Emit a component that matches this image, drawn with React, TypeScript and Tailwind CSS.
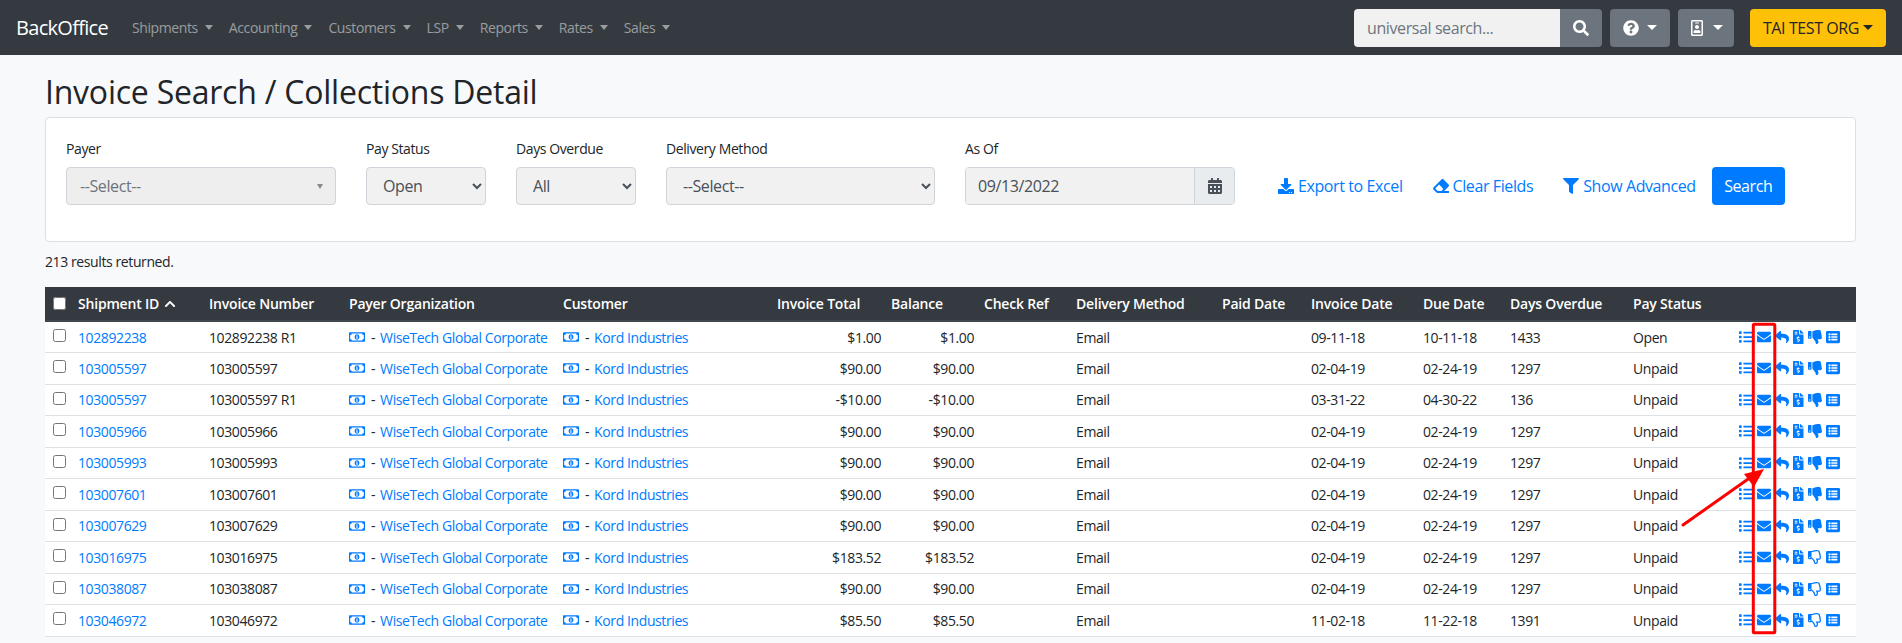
import React from 'react';
import {
  FaCalendarAlt,
  FaChevronUp,
  FaDownload,
  FaEnvelope,
  FaEraser,
  FaFileInvoiceDollar,
  FaFilter,
  FaList,
  FaListAlt,
  FaQuestionCircle,
  FaRegIdBadge,
  FaRegMoneyBillAlt,
  FaRegThumbsDown,
  FaReply,
  FaSearch,
  FaThumbsDown,
} from 'react-icons/fa';

const navItems = ['Shipments', 'Accounting', 'Customers', 'LSP', 'Reports', 'Rates', 'Sales'];

const rows = [
  { id: '102892238', inv: '102892238 R1', total: '$1.00', date: '09-11-18', due: '10-11-18', days: '1433', status: 'Open', down: true },
  { id: '103005597', inv: '103005597', total: '$90.00', date: '02-04-19', due: '02-24-19', days: '1297', status: 'Unpaid', down: true },
  { id: '103005597', inv: '103005597 R1', total: '-$10.00', date: '03-31-22', due: '04-30-22', days: '136', status: 'Unpaid', down: true },
  { id: '103005966', inv: '103005966', total: '$90.00', date: '02-04-19', due: '02-24-19', days: '1297', status: 'Unpaid', down: true },
  { id: '103005993', inv: '103005993', total: '$90.00', date: '02-04-19', due: '02-24-19', days: '1297', status: 'Unpaid', down: true },
  { id: '103007601', inv: '103007601', total: '$90.00', date: '02-04-19', due: '02-24-19', days: '1297', status: 'Unpaid', down: true },
  { id: '103007629', inv: '103007629', total: '$90.00', date: '02-04-19', due: '02-24-19', days: '1297', status: 'Unpaid', down: true },
  { id: '103016975', inv: '103016975', total: '$183.52', date: '02-04-19', due: '02-24-19', days: '1297', status: 'Unpaid', down: false },
  { id: '103038087', inv: '103038087', total: '$90.00', date: '02-04-19', due: '02-24-19', days: '1297', status: 'Unpaid', down: false },
  { id: '103046972', inv: '103046972', total: '$85.50', date: '11-02-18', due: '11-22-18', days: '1391', status: 'Unpaid', down: false },
];

const headers = [
  { label: 'Invoice Number', w: 'w-[140px]' },
  { label: 'Payer Organization', w: 'w-[214px]' },
  { label: 'Customer', w: 'w-[214px]' },
  { label: 'Invoice Total', w: 'w-[114px]' },
  { label: 'Balance', w: 'w-[93px]' },
  { label: 'Check Ref', w: 'w-[92px]' },
  { label: 'Delivery Method', w: 'w-[146px]' },
  { label: 'Paid Date', w: 'w-[89px]' },
  { label: 'Invoice Date', w: 'w-[112px]' },
  { label: 'Due Date', w: 'w-[87px]' },
  { label: 'Days Overdue', w: 'w-[123px]' },
  { label: 'Pay Status', w: 'w-[106px]' },
];

const MoneyLink = ({ name }: { name: string }) => (
  <span className="flex items-center whitespace-nowrap">
    <FaRegMoneyBillAlt className="text-[#007bff] text-[16px]" />
    <span className="ml-[6px] mr-[5px]">-</span>
    <a className="text-[#007bff]">{name}</a>
  </span>
);

const FilterLabel = ({ children }: { children: React.ReactNode }) => (
  <label className="block text-[14px] leading-[21px] mb-[8px]">{children}</label>
);

const TextLink = ({ icon, children }: { icon: React.ReactNode; children: React.ReactNode }) => (
  <a className="flex items-center gap-[4px] text-[#007bff] whitespace-nowrap">
    {icon}
    {children}
  </a>
);

export default function App() {
  return (
    <div className="relative min-h-[643px] bg-[#f8f9fa] text-[#212529] font-['Open_Sans',sans-serif] text-[14px] tracking-[-0.4px] overflow-hidden">
      <nav className="h-[55px] bg-[#343a40] flex items-center pl-[16px] pr-[16px]">
        <a className="text-white text-[20px] tracking-[-0.7px] mr-[24px]">BackOffice</a>
        <ul className="flex items-center gap-[16px] text-[14px] text-white/50">
          {navItems.map((item) => (
            <li key={item} className="flex items-center gap-[7px]">
              {item}
              <span className="border-t-[5px] border-x-[4.5px] border-x-transparent border-t-white/50" />
            </li>
          ))}
        </ul>
        <div className="ml-auto flex items-center">
          <div className="flex w-[248px] h-[38px]">
            <input
              readOnly
              placeholder="universal search..."
              className="w-[206px] bg-[#f1f1f1] rounded-l-[4px] px-[13px] text-[16px] placeholder:text-[#6c757d] outline-none"
            />
            <button className="w-[42px] bg-[#6c757d] rounded-r-[4px] text-white flex items-center justify-center">
              <FaSearch className="text-[16px]" />
            </button>
          </div>
          <button className="ml-[8px] w-[60px] h-[38px] bg-[#6c757d] rounded-[4px] text-white flex items-center justify-center gap-[8px]">
            <FaQuestionCircle className="text-[16px]" />
            <span className="border-t-[5px] border-x-[5px] border-x-transparent border-t-white" />
          </button>
          <button className="ml-[8px] w-[56px] h-[38px] bg-[#6c757d] rounded-[4px] text-white flex items-center justify-center gap-[8px]">
            <FaRegIdBadge className="text-[16px]" />
            <span className="border-t-[5px] border-x-[5px] border-x-transparent border-t-white" />
          </button>
          <button className="ml-[16px] w-[136px] h-[38px] bg-[#ffc107] rounded-[4px] text-[#212529] text-[16px] flex items-center justify-center gap-[4px]">
            TAI TEST ORG
            <span className="border-t-[5px] border-x-[5px] border-x-transparent border-t-[#212529]" />
          </button>
        </div>
      </nav>

      <main className="pl-[45px] pr-[46px]">
        <h1 className="text-[32px] leading-[38px] font-medium tracking-[-0.23px] mt-[18px] mb-[6px]">Invoice Search / Collections Detail</h1>

        <section className="h-[125px] bg-white border border-[#dfdfdf] rounded-[4px] pl-[20px] pt-[20px] flex items-start text-[14px]">
          <div className="w-[270px] mr-[30px]">
            <FilterLabel>Payer</FilterLabel>
            <div className="h-[38px] bg-[#eeeeee] border border-[#ced4da] rounded-[4px] flex items-center justify-between pl-[13px] pr-[12px] text-[16px] text-[#6c757d]">
              --Select--
              <span className="border-t-[5px] border-x-[3px] border-x-transparent border-t-[#888888]" />
            </div>
          </div>
          <div className="w-[120px] mr-[30px]">
            <FilterLabel>Pay Status</FilterLabel>
            <select className="w-full h-[38px] bg-[#f1f1f1] border border-[#ced4da] rounded-[4px] px-[12px] text-[16px] text-[#495057]">
              <option>Open</option>
            </select>
          </div>
          <div className="w-[120px] mr-[30px]">
            <FilterLabel>Days Overdue</FilterLabel>
            <select className="w-full h-[38px] bg-[#f1f1f1] border border-[#ced4da] rounded-[4px] px-[12px] text-[16px] text-[#495057]">
              <option>All</option>
            </select>
          </div>
          <div className="w-[269px] mr-[30px]">
            <FilterLabel>Delivery Method</FilterLabel>
            <select className="w-full h-[38px] bg-[#f1f1f1] border border-[#ced4da] rounded-[4px] px-[12px] text-[16px] text-[#495057]">
              <option>--Select--</option>
            </select>
          </div>
          <div className="w-[270px]">
            <FilterLabel>As Of</FilterLabel>
            <div className="flex h-[38px] border border-[#ced4da] rounded-[4px] overflow-hidden text-[16px] text-[#495057]">
              <div className="flex-1 bg-[#f1f1f1] px-[12px] flex items-center">09/13/2022</div>
              <div className="w-[40px] bg-[#e9ecef] border-l border-[#ced4da] flex items-center justify-center">
                <FaCalendarAlt className="text-[16px]" />
              </div>
            </div>
          </div>
          <div className="flex items-center h-[38px] mt-[29px] ml-[43px] text-[16px]">
            <TextLink icon={<FaDownload className="text-[16px]" />}>Export to Excel</TextLink>
            <span className="w-[30px]" />
            <TextLink icon={<FaEraser className="text-[16px]" />}>Clear Fields</TextLink>
            <span className="w-[30px]" />
            <TextLink icon={<FaFilter className="text-[16px]" />}>Show Advanced</TextLink>
            <button className="ml-[16px] w-[73px] h-[38px] bg-[#007bff] text-white rounded-[4px]">Search</button>
          </div>
        </section>

        <p className="mt-[9px] mb-[15px] leading-[21px]">213 results returned.</p>

        <table className="w-[1811px] table-fixed border-collapse">
          <colgroup>
            <col className="w-[28px]" />
            <col className="w-[131px]" />
            {headers.map((h) => (
              <col key={h.label} className={h.w} />
            ))}
            <col />
          </colgroup>
          <thead>
            <tr className="bg-[#343a40] text-white text-left tracking-[-0.2px]">
              <th className="h-[34px] px-[8px] py-0 border-b-2 border-[#3f464c]">
                <input type="checkbox" className="block w-[13px] h-[13px]" />
              </th>
              <th className="px-[5px] py-0 font-semibold border-b-2 border-[#3f464c] whitespace-nowrap">
                <span className="flex items-center gap-[5px]">
                  Shipment ID <FaChevronUp className="text-[12px]" />
                </span>
              </th>
              {headers.map((h) => (
                <th key={h.label} className="px-[5px] py-0 font-semibold border-b-2 border-[#3f464c] whitespace-nowrap">
                  {h.label}
                </th>
              ))}
              <th className="border-b-2 border-[#3f464c]" />
            </tr>
          </thead>
          <tbody>
            {rows.map((r, i) => (
              <tr key={i} className="bg-white border-b border-[#dee2e6] h-[31.5px]">
                <td className="px-[8px] py-0">
                  <input type="checkbox" className="block w-[13px] h-[13px] -mt-[3px]" />
                </td>
                <td className="px-[5px] py-0 text-[#007bff]">{r.id}</td>
                <td className="px-[5px] py-0">{r.inv}</td>
                <td className="px-[5px] py-0"><MoneyLink name="WiseTech Global Corporate" /></td>
                <td className="px-[5px] py-0"><MoneyLink name="Kord Industries" /></td>
                <td className="px-[5px] py-0 text-right">{r.total}</td>
                <td className="px-[5px] py-0 text-right">{r.total}</td>
                <td className="px-[5px] py-0" />
                <td className="px-[5px] py-0">Email</td>
                <td className="px-[5px] py-0" />
                <td className="px-[5px] py-0">{r.date}</td>
                <td className="px-[5px] py-0">{r.due}</td>
                <td className="px-[5px] py-0">{r.days}</td>
                <td className="px-[5px] py-0">{r.status}</td>
                <td className="p-0 pl-[5px]">
                  <div className="flex items-center gap-[4px] text-[#007bff] text-[14px]">
                    <FaList className="shrink-0" />
                    <FaEnvelope className="shrink-0" />
                    <FaReply className="shrink-0" />
                    <FaFileInvoiceDollar className="shrink-0 w-[10.5px]" />
                    {r.down ? <FaThumbsDown className="shrink-0" /> : <FaRegThumbsDown className="shrink-0" />}
                    <FaListAlt className="shrink-0" />
                  </div>
                </td>
              </tr>
            ))}
          </tbody>
        </table>
      </main>

      {/* red annotation drawn over the screenshot */}
      <svg className="absolute left-0 top-0 pointer-events-none" width="1902" height="643">
        <rect x="1753.3" y="324.2" width="21.5" height="308.6" fill="none" stroke="#ff0000" strokeWidth="3" rx="1" />
        <line x1="1683" y1="525" x2="1751" y2="477" stroke="#ff0000" strokeWidth="3" strokeLinecap="round" />
        <polygon points="1764,469 1744,474 1754,487" fill="#ff0000" />
      </svg>
    </div>
  );
}
